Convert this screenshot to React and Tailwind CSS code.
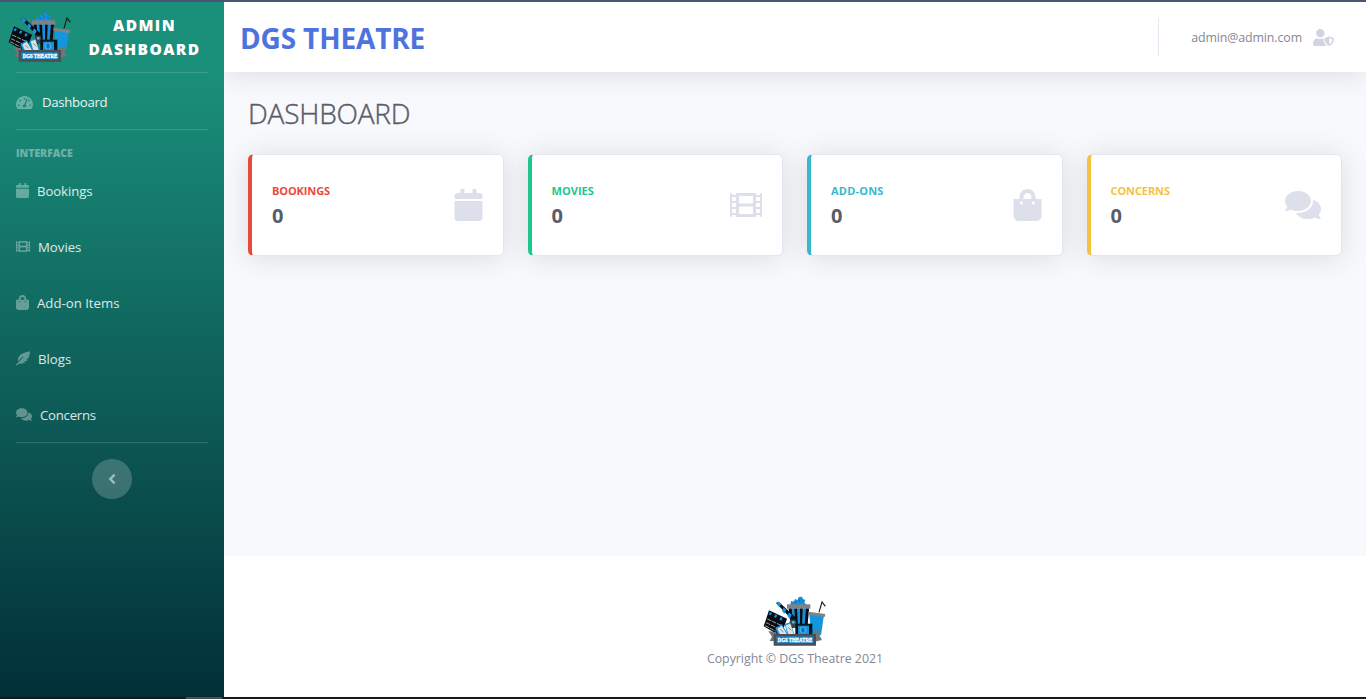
import React from "react";
import {
  FaTachometerAlt,
  FaCalendar,
  FaFilm,
  FaShoppingBag,
  FaFeatherAlt,
  FaComments,
  FaAngleLeft,
  FaUserShield,
} from "react-icons/fa";

function Logo() {
  return (
    <svg viewBox="0 0 192 150" className="block h-[50px] w-[64px] shrink-0">
      <path d="M82 27 84 15 92 17 96 9 104 12 107 3 117 2 120 9 127 12 124 20 132 27Z" fill="#1790dc" />
      <path d="M92 17 101 20M107 9 110 18M118 13 122 20" stroke="#0b5f9b" strokeWidth="2" />
      <path d="M77 37H138L133 96H84Z" fill="#1790dc" />
      <path d="M77 37H86L90 96H84ZM94 37H102L105 96H98ZM111 37H119L117 96H111ZM129 37H138L133 96H124Z" fill="#080c10" />
      <path d="M72 25H142V38H72Z" fill="#808285" />
      <path d="M168 49 177 18 187 31" fill="none" stroke="#17191b" strokeWidth="3.4" />
      <path d="M139 56H183L174 118H145Z" fill="#1496df" />
      <path d="M136 47 187 54 185 63 137 57Z" fill="#808285" />
      <path d="M39 21 47 17 99 65 92 76Z" fill="#080c10" />
      <path d="M39 21 47 17 55 25 48 33ZM62 34 70 41 64 53 57 45ZM78 49 86 56 81 68 73 60Z" fill="#1790dc" />
      <path d="M18 43 72 68 53 121 2 91Z" fill="#080c10" />
      <path d="M21 48 27 51 23 58 17 56ZM37 55 43 58 39 66 33 63ZM53 63 59 66 55 74 49 71Z" fill="#1790dc" />
      <path d="M13 69 54 88M9 80 48 98M6 89 38 105" stroke="#e8edf0" strokeWidth="2" strokeDasharray="13 3" />
      <path d="M83 70 98 73 103 87 93 96 77 86Z" fill="#3d444a" />
      <circle cx="91" cy="79" r="4" fill="#59bff3" />
      <path d="M37 97 56 84 75 114H44Z" fill="#1a91db" />
      <path d="M43 98 56 89 72 115H51Z" fill="#d8e1e5" />
      <path d="M65 84 82 79 94 114H73Z" fill="#1a91db" />
      <path d="M68 88 82 83 92 114H76Z" fill="#dce3e6" />
      <path d="M52 100 61 108M76 94 85 103" stroke="#828d95" strokeWidth="3" />
      <path d="M97 83H148V117H97Z" fill="#07131d" />
      <path d="M105 89H138V115H105Z" fill="#158fd9" />
      <circle cx="120" cy="102" r="9" fill="none" stroke="#55b4ea" strokeWidth="3" />
      <path d="M120 94V110" stroke="#075a91" strokeWidth="3" />
      <path d="M16 105 40 109 40 136 20 135 27 122ZM152 109 173 103 169 118 177 132 154 137Z" fill="#727476" />
      <path d="M32 114H159V149H32Z" fill="#4c4e51" />
      <path d="M40 121H151V142H40Z" fill="#1583c6" />
      <text x="96" y="137" textAnchor="middle" textLength="104" lengthAdjust="spacingAndGlyphs" fill="white" stroke="white" strokeWidth="0.9" fontFamily="Liberation Serif, serif" fontWeight="bold" fontSize="16">DGS THEATRE</text>
    </svg>
  );
}

const navItems = [
  { label: "Bookings", Icon: FaCalendar, icon: "w-[13px]", text: "ml-[8px] tracking-[-0.1px]" },
  { label: "Movies", Icon: FaFilm, icon: "w-[14px] [stroke-width:8]", text: "ml-[8px]" },
  { label: "Add-on Items", Icon: FaShoppingBag, icon: "w-[13px]", text: "ml-[8px]" },
  { label: "Blogs", Icon: FaFeatherAlt, icon: "w-[14px]", text: "ml-[8px]" },
  { label: "Concerns", Icon: FaComments, icon: "w-[16px]", text: "ml-[8px] tracking-[-0.25px]" },
];

const cards = [
  { label: "BOOKINGS", Icon: FaCalendar, bar: "border-l-[#e74a3b]", color: "text-[#e74a3b]", icon: "w-[29px]", text: "tracking-[-0.1px]" },
  { label: "MOVIES", Icon: FaFilm, bar: "border-l-[#1cc88a]", color: "text-[#1cc88a]", icon: "w-[32px]", text: "tracking-[0.05px]" },
  { label: "ADD-ONS", Icon: FaShoppingBag, bar: "border-l-[#36b9cc]", color: "text-[#36b9cc]", icon: "w-[29px]", text: "tracking-[0.2px]" },
  { label: "CONCERNS", Icon: FaComments, bar: "border-l-[#f6c23e]", color: "text-[#f6c23e]", icon: "w-[36px]", text: "tracking-[-0.1px]" },
];

function Sidebar() {
  return (
    <aside className="flex w-[224px] shrink-0 flex-col bg-[linear-gradient(180deg,#1a8f7a_10%,#022f38_100%)] text-white">
      <div className="flex h-[70px] items-center pl-2">
        <Logo />
        <div className="w-[145px] text-center text-[15.5px] leading-6 font-extrabold tracking-[1.4px]">
          ADMIN
          <br />
          DASHBOARD
        </div>
      </div>
      <hr className="mx-4 border-white/15" />
      <a className="flex h-14 items-center px-4 pt-[3px] text-[13.2px]">
        <FaTachometerAlt className="mb-px h-[15px] w-[17px] text-white/35" />
        <span className="ml-[9px] tracking-[-0.3px] text-white/90">Dashboard</span>
      </a>
      <hr className="mx-4 border-white/15" />
      <div className="mt-[15px] px-4 text-[10.4px] leading-4 font-extrabold text-white/40">INTERFACE</div>
      <nav className="mt-0.5">
        {navItems.map(({ label, Icon, icon, text }) => (
          <a key={label} className="flex h-14 items-center px-4 text-[13.2px] text-white/85">
            <Icon className={`mb-px h-[15px] text-white/35 ${icon}`} />
            <span className={`pt-0.5 ${text}`}>{label}</span>
          </a>
        ))}
      </nav>
      <hr className="mx-4 -mt-px border-white/15" />
      <button className="mx-auto mt-4 flex size-10 items-center justify-center rounded-full bg-white/20">
        <FaAngleLeft className="h-4 w-[10px] text-white/50" />
      </button>
    </aside>
  );
}

export default function App() {
  return (
    <div className="flex h-[699px] flex-col overflow-hidden bg-white font-['Open_Sans','Noto_Sans',sans-serif]">
      <div className="h-0.5 shrink-0 bg-[#4b5572]" />
      <div className="flex min-h-0 flex-1">
        <Sidebar />
        <div className="flex flex-1 flex-col overflow-hidden bg-[#f8f9fc]">
          <header className="flex h-[70px] shrink-0 items-center bg-white px-4 shadow-[0_2px_28px_0_rgba(58,59,69,0.15)]">
            <h1 className="pt-px text-[28px] leading-9 font-bold tracking-[-0.15px] text-[#4e73df]">DGS THEATRE</h1>
            <div className="ml-auto h-[38px] w-px bg-[#e3e6f0]" />
            <span className="ml-8 pt-0.5 text-[12.4px] tracking-[-0.12px] text-[#858796]">admin@admin.com</span>
            <FaUserShield className="mr-4 ml-[11px] h-[17px] w-[21px] text-[#d1d3e2]" />
          </header>
          <main className="flex-1 px-6 pt-[23px]">
            <h2 className="text-[28px] leading-9 font-light tracking-[-0.2px] text-[#5a5c69] [-webkit-text-stroke:0.4px]">DASHBOARD</h2>
            <div className="mt-[23px] grid grid-cols-4 gap-6">
              {cards.map(({ label, Icon, bar, color, icon, text }) => (
                <section
                  key={label}
                  className={`flex h-[102px] items-center justify-between rounded-[5.6px] border border-l-4 border-[#e3e6f0] bg-white px-5 shadow-[0_2px_28px_0_rgba(58,59,69,0.15)] ${bar}`}
                >
                  <div className="pt-px">
                    <div className={`text-[11px] leading-4 font-bold ${text} ${color}`}>{label}</div>
                    <div className="mt-[5px] text-xl leading-6 font-bold text-[#5a5c69]">0</div>
                  </div>
                  <Icon className={`h-8 text-[#dddfeb] ${icon}`} />
                </section>
              ))}
            </div>
          </main>
          <footer className="flex h-[141px] shrink-0 flex-col items-center bg-white pt-10">
            <Logo />
            <p className="mt-[5px] text-[12.4px] leading-4 tracking-[-0.03px] text-[#858796]">Copyright © DGS Theatre 2021</p>
          </footer>
        </div>
      </div>
      <div className="h-0.5 shrink-0 bg-[#1b1718] pl-[186px]">
        <div className="h-full w-9 bg-[#504d4e]" />
      </div>
    </div>
  );
}
